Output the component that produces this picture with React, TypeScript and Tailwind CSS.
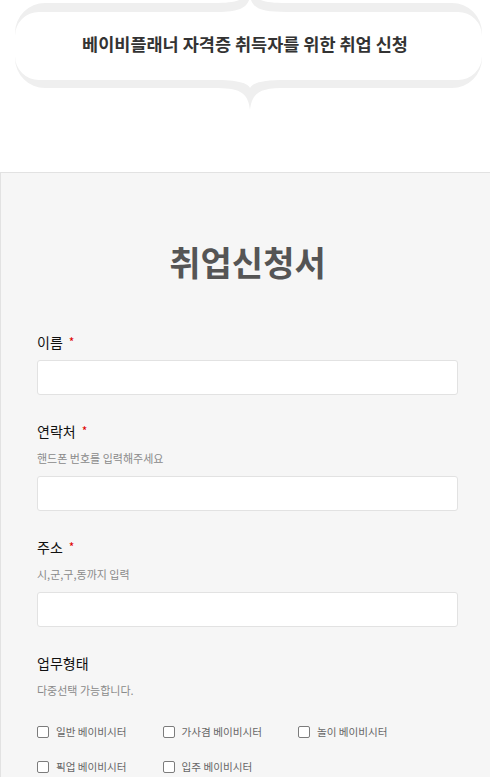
import React from "react";

const FONT = '"Noto Sans CJK KR", "Noto Sans", sans-serif';

// curly-brace speech bubble outline, shared by the grey rim and the white body
function bracePath(t: number, b: number, up: number, down: number, r: number) {
  const L = 15;
  const R = 482;
  const cx = 250;
  const w = 36;
  return [
    `M ${L} ${t + r}`,
    `A ${r} ${r} 0 0 1 ${L + r} ${t}`,
    `L ${cx - w} ${t}`,
    `C ${cx - 12} ${t} ${cx - 2} ${t - 3} ${cx} ${t - up}`,
    `C ${cx + 2} ${t - 3} ${cx + 12} ${t} ${cx + w} ${t}`,
    `L ${R - r} ${t}`,
    `A ${r} ${r} 0 0 1 ${R} ${t + r}`,
    `L ${R} ${b - r}`,
    `A ${r} ${r} 0 0 1 ${R - r} ${b}`,
    `L ${cx + w} ${b}`,
    `C ${cx + 12} ${b} ${cx + 2} ${b + 3} ${cx} ${b + down}`,
    `C ${cx - 2} ${b + 3} ${cx - 12} ${b} ${cx - w} ${b}`,
    `L ${L + r} ${b}`,
    `A ${r} ${r} 0 0 1 ${L} ${b - r}`,
    "Z",
  ].join(" ");
}

function Bubble() {
  return (
    <div className="relative h-[172px]">
      <svg width={490} height={120} className="absolute left-0 top-0">
        <path d={bracePath(3, 88, 18, 22, 30)} fill="#efefef" />
        <path d={bracePath(12, 80, 16, 8, 24)} fill="#ffffff" />
      </svg>
      <div className="relative flex justify-center pt-[30px]">
        <h2 className="text-[17.5px] leading-[28px] font-bold text-[#333]">
          베이비플래너 자격증 취득자를 위한 취업 신청
        </h2>
      </div>
    </div>
  );
}

function Field({ label, required, hint }: { label: string; required?: boolean; hint?: string }) {
  return (
    <div className="mt-[26px] first:mt-0">
      <div className="flex items-center text-[14px] leading-[20px] text-[#111]">
        {label}
        {required && <span className="ml-[6px] text-[#e00000] text-[12px]">*</span>}
      </div>
      {hint && <p className="mt-[9px] text-[11px] leading-[16px] text-[#8a8a8a]">{hint}</p>}
      <input
        type="text"
        className={`block w-full h-[35px] bg-white border border-[#e2e2e2] rounded-[3px] outline-none ${
          hint ? "mt-[10px]" : "mt-[8px]"
        }`}
      />
    </div>
  );
}

function Check({ label }: { label: string }) {
  return (
    <label className="flex items-center gap-[7px] text-[10.6px] leading-[20px] text-[#666]">
      <span className="block w-[12px] h-[12px] bg-white border border-[#7c7c7c] rounded-[2px]" />
      {label}
    </label>
  );
}

export default function App() {
  return (
    <div className="w-[490px] min-h-[777px] overflow-hidden bg-white" style={{ fontFamily: FONT }}>
      <Bubble />
      <div className="w-[494px] bg-[#f6f6f6] border-t border-l border-[#e2e2e2] px-[36px] pb-10">
        <h1 className="pt-[69px] text-center text-[34px] leading-[40px] font-bold text-[#555]">
          취업신청서
        </h1>
        <div className="mt-[50px]">
          <Field label="이름" required />
          <Field label="연락처" required hint="핸드폰 번호를 입력해주세요" />
          <Field label="주소" required hint="시,군,구,동까지 입력" />
          <div className="mt-[26px]">
            <div className="text-[14px] leading-[20px] text-[#111]">업무형태</div>
            <p className="mt-[9px] text-[11px] leading-[16px] text-[#8a8a8a]">다중선택 가능합니다.</p>
            <div className="mt-[24px] flex flex-wrap gap-x-[36px] gap-y-[15px]">
              <Check label="일반 베이비시터" />
              <Check label="가사겸 베이비시터" />
              <Check label="놀이 베이비시터" />
              <Check label="픽업 베이비시터" />
              <Check label="입주 베이비시터" />
            </div>
          </div>
        </div>
      </div>
    </div>
  );
}
